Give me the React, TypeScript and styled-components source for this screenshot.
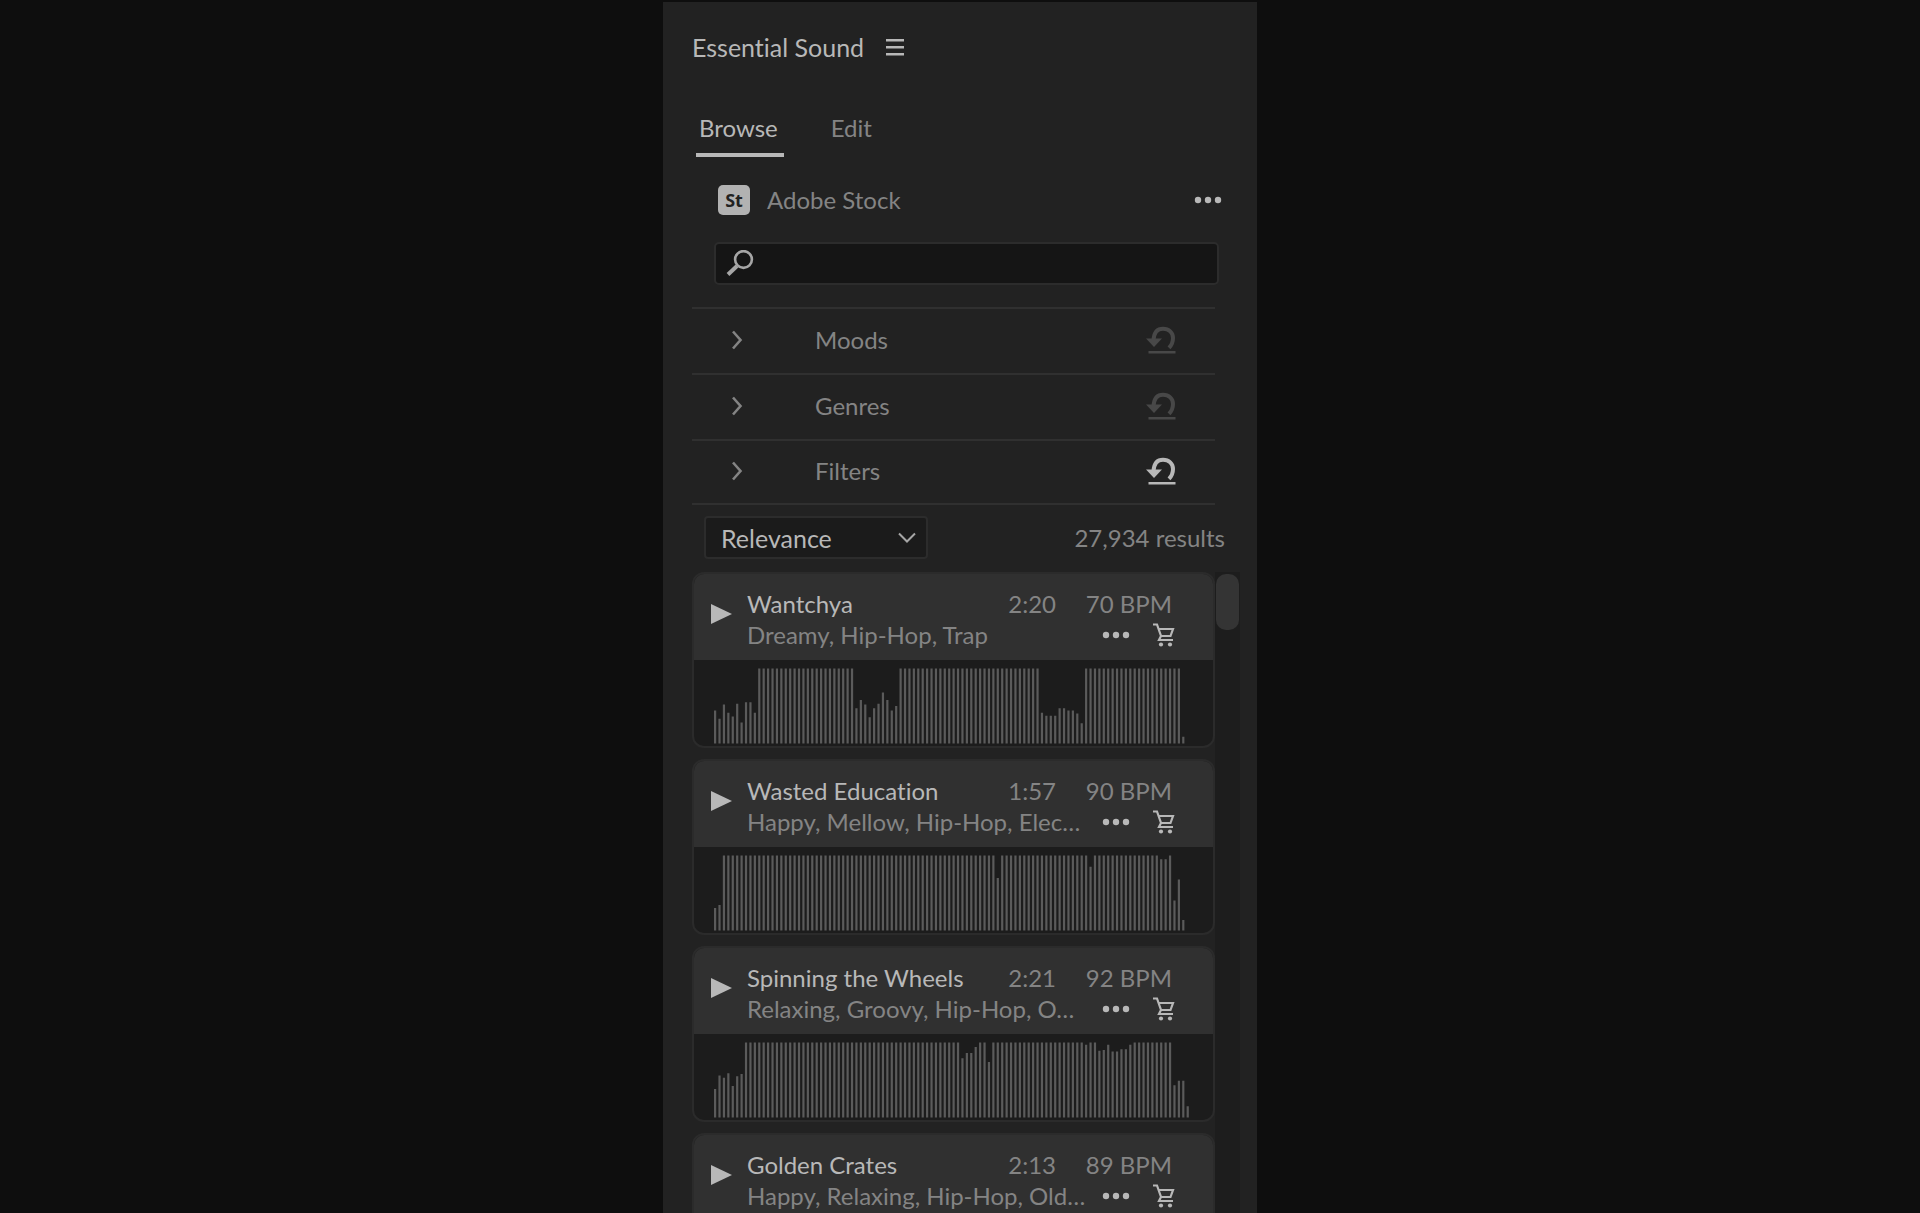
import React from "react";
import styled, { createGlobalStyle } from "styled-components";

const color = {
  page: "#0e0e0e",
  panel: "#222222",
  line: "#303030",
  card: "#303030",
  well: "#1c1c1c",
  field: "#151515",
  bright: "#b8b8b8",
  text: "#a6a6a6",
  muted: "#848484",
  dim: "#484848",
};

const GlobalStyle = createGlobalStyle`
  *, *::before, *::after { box-sizing: border-box; }
  body {
    margin: 0;
    background: ${color.page};
    color: ${color.text};
    font: 24px/30px Lato, "Noto Sans", sans-serif;
    font-variant-ligatures: none;
  }
  button, input, select { font: inherit; font-variant-ligatures: none; color: inherit; }
  h1, h2, p { margin: 0; font: inherit; font-variant-ligatures: none; }
`;

const Page = styled.main`
  display: flex;
  justify-content: center;
  height: 100vh;
  padding-top: 2px;
  overflow: hidden;
`;

const Panel = styled.section`
  display: flex;
  flex-direction: column;
  width: 100%;
  max-width: 594px;
  min-height: 0;
  background: ${color.panel};
`;

const PanelHeader = styled.header`
  display: flex;
  align-items: center;
  gap: 22px;
  height: 89px;
  padding-left: 29px;
  color: ${color.bright};
`;

const PanelTitle = styled.h1`
  && { font-size: 25px; }
`;

const IconButton = styled.button<{ $tone?: string }>`
  display: flex;
  padding: 0;
  border: 0;
  background: none;
  color: ${(p) => p.$tone ?? color.bright};
  cursor: pointer;

  svg { display: block; }
`;

const Tabs = styled.div`
  display: flex;
  gap: 44px;
  padding-left: 33px;
`;

const Tab = styled.button<{ $active?: boolean }>`
  padding: 22px 6px 10px 3px;
  border: 0;
  border-bottom: 4px solid ${(p) => (p.$active ? color.bright : "transparent")};
  background: none;
  color: ${(p) => (p.$active ? color.bright : color.muted)};
  cursor: pointer;
`;

const SourceRow = styled.div`
  display: flex;
  align-items: center;
  gap: 17px;
  height: 85px;
  padding: 0 35px 0 55px;
  color: ${color.muted};
`;

const StockBadge = styled.span`
  display: grid;
  place-items: center;
  width: 32px;
  height: 30px;
  border-radius: 5px;
  background: #b2b2b2;
  color: ${color.panel};
  font: 700 18px/30px "Noto Sans", sans-serif;
`;

const SourceName = styled.h2`
  flex: 1;
`;

const SearchBox = styled.label`
  display: flex;
  align-items: center;
  gap: 10px;
  height: 43px;
  margin: 0 38px 22px 51px;
  padding: 0 10px;
  border: 2px solid #2c2c2c;
  border-radius: 5px;
  background: ${color.field};
  color: ${color.text};
`;

const SearchInput = styled.input.attrs({ type: "search" })`
  flex: 1;
  min-width: 0;
  padding: 0;
  border: 0;
  outline: 0;
  background: none;
`;

const Facets = styled.div`
  margin: 0 42px 11px 29px;
  border-bottom: 2px solid ${color.line};
`;

const Facet = styled.div`
  display: flex;
  align-items: center;
  height: 66px;
  padding: 0 39px 2px 0;
  border-top: 2px solid ${color.line};

  &:last-child { height: 64px; }
`;

const FacetToggle = styled.button`
  display: flex;
  flex: 1;
  align-items: center;
  gap: 72px;
  padding: 0 0 0 39px;
  border: 0;
  background: none;
  color: ${color.muted};
  text-align: left;
  cursor: pointer;
`;

const SortRow = styled.div`
  display: flex;
  align-items: center;
  justify-content: space-between;
  margin-bottom: 13px;
  padding: 0 32px 0 41px;
  color: ${color.muted};
`;

const SelectWrap = styled.div`
  position: relative;
  width: 224px;
  color: ${color.text};

  svg {
    position: absolute;
    top: 16px;
    right: 12px;
    pointer-events: none;
  }
`;

const Select = styled.select`
  appearance: none;
  display: block;
  width: 100%;
  height: 43px;
  padding: 0 40px 0 15px;
  border: 2px solid #2c2c2c;
  border-radius: 4px;
  background: #1b1b1b;
  color: ${color.bright};
  && { font-size: 25px; }
`;

const Results = styled.div`
  display: flex;
  flex: 1;
  min-height: 0;
  padding: 0 17px 0 29px;
`;

const TrackList = styled.ul`
  flex: 1;
  display: flex;
  flex-direction: column;
  gap: 11px;
  margin: 0;
  padding: 0;
  overflow-y: auto;
  scrollbar-width: none;
  list-style: none;
`;

const ScrollTrack = styled.div`
  width: 25px;
  padding: 2px 1px 0 1px;
  background: #1d1d1d;
`;

const ScrollThumb = styled.div`
  height: 56px;
  border-radius: 10px;
  background: #343434;
`;

const Card = styled.li`
  flex: none;
  height: 176px;
  border: 2px solid #2b2b2b;
  border-radius: 12px;
  overflow: hidden;
  background: ${color.well};
`;

const CardHead = styled.div`
  display: flex;
  gap: 15px;
  height: 86px;
  padding: 15px 38px 0 17px;
  background: ${color.card};
`;

const PlayButton = styled(IconButton)`
  align-self: start;
  padding-top: 15px;
`;

const Details = styled.div`
  flex: 1;
  min-width: 0;
  color: ${color.muted};
`;

const TitleLine = styled.div`
  display: flex;
  height: 31px;
  padding-right: 3px;
`;

const Title = styled.h2`
  flex: 1;
  color: ${color.bright};
`;

const Tempo = styled.span`
  width: 116px;
  text-align: right;
`;

const TagLine = styled.div`
  display: flex;
  align-items: center;
  justify-content: space-between;
  white-space: nowrap;
`;

const Actions = styled.div`
  display: flex;
  align-items: center;
  gap: 23px;
`;

const Wave = styled.svg`
  display: block;
  height: 86px;
  fill: #5b5b5b;
`;

const Dots = () => (
  <svg width="28" height="8" viewBox="0 0 28 8" fill="currentColor" aria-hidden="true">
    <circle cx="4" cy="4" r="3.2" />
    <circle cx="14" cy="4" r="3.2" />
    <circle cx="24" cy="4" r="3.2" />
  </svg>
);

const Menu = () => (
  <svg width="18" height="18" viewBox="0 0 18 18" fill="currentColor" aria-hidden="true">
    <path d="M0 1h18v2.500H0zM0 8h18v2.500H0zM0 15h18v2.500H0z" />
  </svg>
);

const Magnifier = () => (
  <svg width="28" height="27" viewBox="0 0 28 27" fill="none" stroke="currentColor" aria-hidden="true">
    <circle cx="17.500" cy="9.500" r="8.400" strokeWidth="2.600" />
    <path d="M11 16 2 24.500" strokeWidth="4" />
  </svg>
);

const ChevronRight = () => (
  <svg width="12" height="20" viewBox="0 0 12 20" fill="none" stroke="currentColor" strokeWidth="2.600" aria-hidden="true">
    <path d="m2 1.500 7.500 8.500L2 18.500" />
  </svg>
);

const ChevronDown = () => (
  <svg width="18" height="12" viewBox="0 0 18 12" fill="none" stroke="currentColor" strokeWidth="2" aria-hidden="true">
    <path d="m1 1.500 8 8 8-8" />
  </svg>
);

const Reset = () => (
  <svg width="30" height="28" viewBox="0 0 30 28" fill="currentColor" aria-hidden="true">
    <path d="M0 12.500h16l-8 8.500z" />
    <path d="M7.500 14C8 6 12 2.700 17 2.700c6 0 10 4 10 9.300 0 3.800-1.200 7-4 9.800" fill="none" stroke="currentColor" strokeWidth="4" />
    <path d="M2.500 25h27v2.500h-27z" />
  </svg>
);

const Play = () => (
  <svg width="21" height="20" viewBox="0 0 21 20" fill="currentColor" aria-hidden="true">
    <path d="M0 0v20l21-10z" />
  </svg>
);

const Cart = () => (
  <svg width="22" height="24" viewBox="0 0 22 24" fill="none" stroke="currentColor" strokeWidth="2.200" aria-hidden="true">
    <path d="M0 1.500h4l4 11.500-2 4H20M5 6h15l-2.500 7H8" />
    <circle cx="8" cy="21.500" r="2.100" fill="currentColor" stroke="none" />
    <circle cx="17" cy="21.500" r="2.100" fill="currentColor" stroke="none" />
  </svg>
);

const full = (count: number): number[] => Array(count).fill(100);

type Track = {
  title: string;
  tags: string;
  time: string;
  bpm: number;
  levels: number[];
};

const tracks: Track[] = [
  {
    title: "Wantchya",
    tags: "Dreamy, Hip-Hop, Trap",
    time: "2:20",
    bpm: 70,
    levels: [
      44, 33, 52, 41, 36, 53, 28, 55, 55, 41, ...full(22),
      47, 58, 52, 35, 47, 53, 68, 58, 44, 50, ...full(32),
      41, 37, 37, 37, 47, 47, 44, 44, 40, 27, ...full(22), 9,
    ],
  },
  {
    title: "Wasted Education",
    tags: "Happy, Mellow, Hip-Hop, Elec…",
    time: "1:57",
    bpm: 90,
    levels: [30, 34, ...full(62), 70, ...full(20), 85, ...full(15), 95, 95, 100, 40, 68, 14],
  },
  {
    title: "Spinning the Wheels",
    tags: "Relaxing, Groovy, Hip-Hop, O…",
    time: "2:21",
    bpm: 92,
    levels: [
      38, 56, 53, 59, 42, 55, 58, ...full(49), 79, 86, 86, 94, 100, 100, 74, ...full(21),
      97, 100, 100, 89, 90, 97, 88, 88, 91, 91, 97, ...full(9), 43, 49, 49, 15,
    ],
  },
  {
    title: "Golden Crates",
    tags: "Happy, Relaxing, Hip-Hop, Old…",
    time: "2:13",
    bpm: 89,
    levels: [40, 52, ...full(103), 20],
  },
];

const BAR_PITCH = 4.417;
const BAR_HEIGHT = 75;

const Waveform = ({ levels }: { levels: number[] }) => (
  <Wave width="500" height="86" viewBox="0 0 500 86" role="img" aria-label="Waveform">
    {levels.map((level, i) => {
      const h = (level / 100) * BAR_HEIGHT;
      return <rect key={i} x={20 + i * BAR_PITCH} y={83.5 - h} width={2.2} height={h} />;
    })}
  </Wave>
);

const TrackCard = ({ track }: { track: Track }) => (
  <Card>
    <CardHead>
      <PlayButton aria-label={`Play ${track.title}`}><Play /></PlayButton>
      <Details>
        <TitleLine>
          <Title>{track.title}</Title>
          <time>{track.time}</time>
          <Tempo>{track.bpm} BPM</Tempo>
        </TitleLine>
        <TagLine>
          <p>{track.tags}</p>
          <Actions>
            <IconButton aria-label="More options"><Dots /></IconButton>
            <IconButton aria-label="License track"><Cart /></IconButton>
          </Actions>
        </TagLine>
      </Details>
    </CardHead>
    <Waveform levels={track.levels} />
  </Card>
);

const facets = [
  { name: "Moods", changed: false },
  { name: "Genres", changed: false },
  { name: "Filters", changed: true },
];

export default function App() {
  return (
    <>
      <GlobalStyle />
      <Page>
        <Panel>
          <PanelHeader>
            <PanelTitle>Essential Sound</PanelTitle>
            <IconButton aria-label="Panel menu"><Menu /></IconButton>
          </PanelHeader>
          <Tabs role="tablist">
            <Tab role="tab" aria-selected="true" $active>Browse</Tab>
            <Tab role="tab" aria-selected="false">Edit</Tab>
          </Tabs>
          <SourceRow>
            <StockBadge aria-hidden="true">St</StockBadge>
            <SourceName>Adobe Stock</SourceName>
            <IconButton aria-label="Stock options"><Dots /></IconButton>
          </SourceRow>
          <SearchBox>
            <Magnifier />
            <SearchInput aria-label="Search Adobe Stock" />
          </SearchBox>
          <Facets>
            {facets.map((facet) => (
              <Facet key={facet.name}>
                <FacetToggle aria-expanded="false">
                  <ChevronRight />
                  {facet.name}
                </FacetToggle>
                <IconButton
                  aria-label={`Reset ${facet.name}`}
                  disabled={!facet.changed}
                  $tone={facet.changed ? color.bright : color.dim}
                >
                  <Reset />
                </IconButton>
              </Facet>
            ))}
          </Facets>
          <SortRow>
            <SelectWrap>
              <Select aria-label="Sort by" defaultValue="Relevance">
                <option>Relevance</option>
              </Select>
              <ChevronDown />
            </SelectWrap>
            <span>27,934 results</span>
          </SortRow>
          <Results>
            <TrackList>
              {tracks.map((track) => (
                <TrackCard key={track.title} track={track} />
              ))}
            </TrackList>
            <ScrollTrack><ScrollThumb /></ScrollTrack>
          </Results>
        </Panel>
      </Page>
    </>
  );
}
